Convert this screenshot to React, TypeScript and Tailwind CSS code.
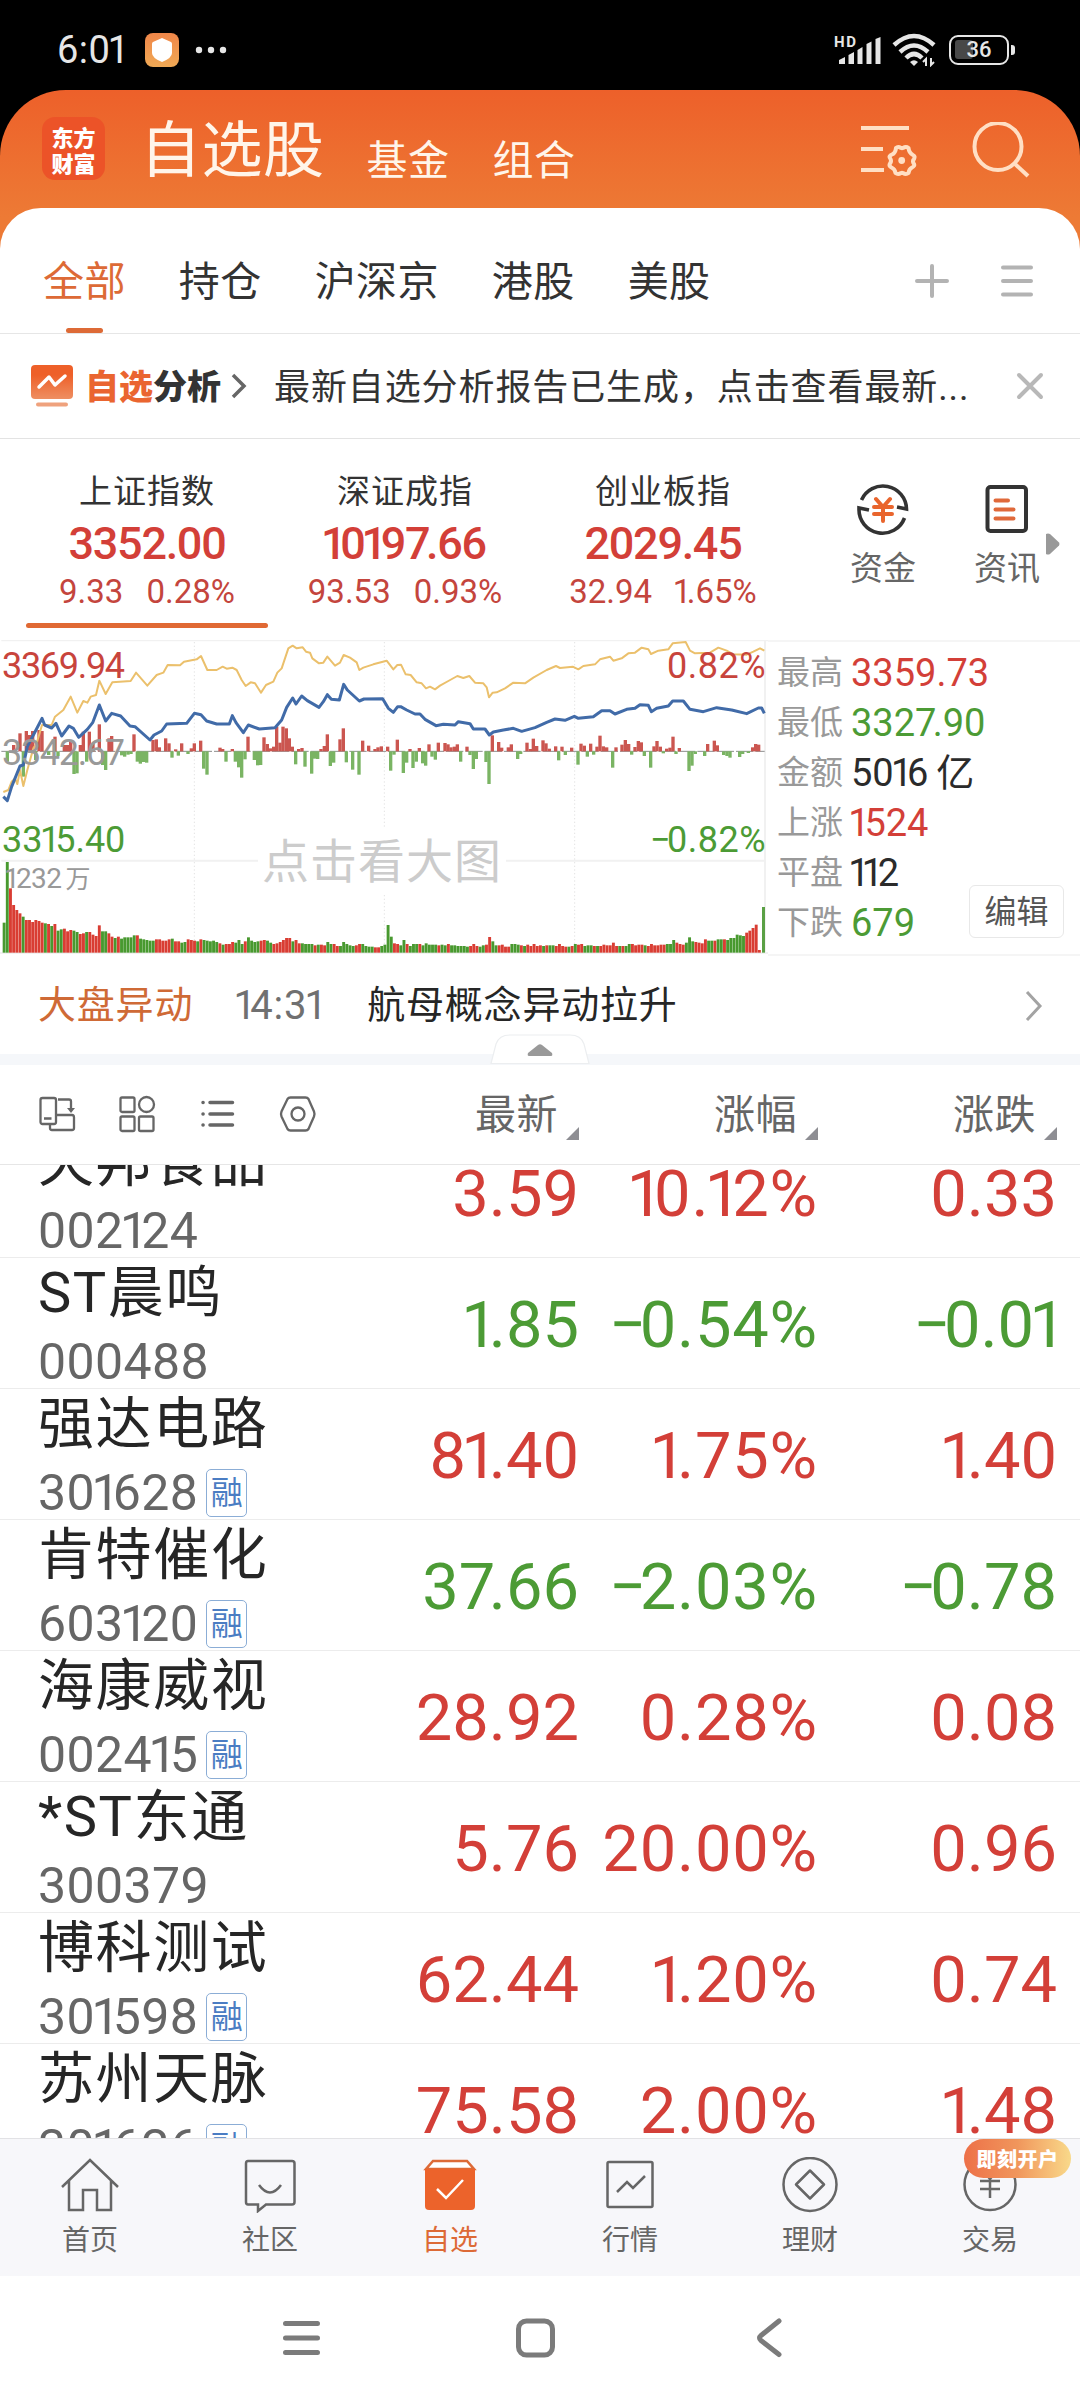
import type { ReactNode } from 'react';

type Direction = 'up' | 'down' | 'flat';

const directionColor: Record<Direction, string> = {
  up: 'text-[#d33f38]',
  down: 'text-[#4c9b35]',
  flat: 'text-[#2b2b2b]',
};

const groups = ['全部', '持仓', '沪深京', '港股', '美股'];

const indices = [
  { name: '上证指数', value: '3352.00', change: '9.33', percent: '0.28%' },
  { name: '深证成指', value: '10197.66', change: '93.53', percent: '0.93%' },
  { name: '创业板指', value: '2029.45', change: '32.94', percent: '1.65%' },
];

const stats: { label: string; value: string; direction: Direction }[] = [
  { label: '最高', value: '3359.73', direction: 'up' },
  { label: '最低', value: '3327.90', direction: 'down' },
  { label: '金额', value: '5016\u2009亿', direction: 'flat' },
  { label: '上涨', value: '1524', direction: 'up' },
  { label: '平盘', value: '112', direction: 'flat' },
  { label: '下跌', value: '679', direction: 'down' },
];

const stocks: {
  name: string;
  code: string;
  margin?: boolean;
  price: string;
  percent: string;
  change: string;
  direction: Direction;
}[] = [
  { name: '天邦食品', code: '002124', price: '3.59', percent: '10.12%', change: '0.33', direction: 'up' },
  { name: 'ST晨鸣', code: '000488', price: '1.85', percent: '−0.54%', change: '−0.01', direction: 'down' },
  { name: '强达电路', code: '301628', margin: true, price: '81.40', percent: '1.75%', change: '1.40', direction: 'up' },
  { name: '肯特催化', code: '603120', margin: true, price: '37.66', percent: '−2.03%', change: '−0.78', direction: 'down' },
  { name: '海康威视', code: '002415', margin: true, price: '28.92', percent: '0.28%', change: '0.08', direction: 'up' },
  { name: '*ST东通', code: '300379', price: '5.76', percent: '20.00%', change: '0.96', direction: 'up' },
  { name: '博科测试', code: '301598', margin: true, price: '62.44', percent: '1.20%', change: '0.74', direction: 'up' },
  { name: '苏州天脉', code: '301626', margin: true, price: '75.58', percent: '2.00%', change: '1.48', direction: 'up' },
];

// Chart geometry uses three units per pixel.
const priceLine =
  '10,500 22,512 35,470 60,408 70,405 82,350 108,300 126,265 134,285 155,294 168,280 185,318 207,288 220,295 236,322 262,298 278,278 298,225 317,273 335,250 362,258 390,288 405,290 450,330 462,315 485,303 500,282 560,280 583,250 603,254 620,273 650,282 688,282 697,257 708,278 730,308 745,285 778,297 825,293 845,270 860,232 878,204 888,222 905,198 922,212 957,232 970,215 982,194 994,208 1018,210 1031,163 1042,180 1078,213 1092,207 1148,206 1165,235 1180,247 1193,230 1202,230 1220,240 1245,252 1260,252 1275,268 1308,287 1330,283 1365,285 1375,275 1410,281 1420,297 1455,297 1468,315 1480,306 1510,300 1540,295 1565,304 1605,293 1640,277 1665,267 1695,271 1723,259 1735,265 1780,260 1805,242 1830,242 1845,252 1880,238 1905,235 1920,224 1945,226 1954,245 1970,235 2005,228 2018,213 2050,213 2070,238 2110,245 2150,233 2195,240 2240,251 2275,234 2285,234 2293,250';

const averageLine =
  '10,486 25,480 35,455 45,445 52,462 60,420 70,468 82,420 100,355 110,340 126,285 155,285 165,260 190,240 212,200 232,248 250,213 262,218 272,200 288,195 298,152 317,192 337,157 392,153 408,128 442,167 470,135 490,128 503,105 540,106 552,95 590,88 603,78 622,120 650,120 668,110 680,116 697,113 710,120 725,150 737,168 752,157 765,160 783,188 798,165 820,155 832,128 845,115 865,55 878,47 890,55 908,52 918,65 930,68 937,85 957,100 970,98 982,80 1005,107 1020,98 1031,75 1050,83 1070,97 1078,120 1090,113 1120,103 1160,92 1180,118 1192,105 1203,104 1217,133 1232,135 1250,157 1265,160 1278,175 1290,170 1305,178 1320,167 1345,153 1372,138 1390,144 1408,138 1425,158 1450,160 1460,172 1467,202 1478,188 1490,187 1515,175 1540,158 1575,160 1600,143 1640,120 1668,108 1680,114 1718,110 1735,118 1750,108 1785,103 1800,88 1830,80 1840,92 1865,85 1885,70 1905,68 1925,53 1945,58 1953,72 1975,62 2005,58 2018,40 2057,36 2070,62 2085,70 2130,68 2155,53 2180,62 2200,73 2240,74 2260,65 2280,55 2293,62';

// [x, y] of the far end of each momentum bar, measured from the zero line.
const ZERO_LINE = 364;
const momentum = [
  [22, 395], [41, 345], [60, 310], [70, 440], [79, 303], [88, 315], [98, 303], [107, 390], [117, 300], [126, 303],
  [146, 375], [165, 320], [174, 378], [193, 345], [203, 345], [212, 330], [222, 432], [231, 430], [241, 345], [250, 305],
  [260, 395], [268, 305], [279, 340], [298, 283], [308, 405], [317, 420], [327, 325], [335, 318], [365, 376], [374, 380],
  [384, 374], [393, 372], [402, 313], [412, 395], [421, 401], [431, 396], [440, 398], [459, 330], [469, 328], [478, 352],
  [497, 325], [507, 340], [516, 383], [527, 358], [535, 377], [545, 340], [564, 372], [574, 355], [583, 340], [602, 332],
  [611, 416], [621, 434], [660, 353], [668, 357], [678, 395], [697, 357], [706, 395], [716, 412], [725, 443], [735, 388],
  [744, 320], [763, 390], [773, 406], [782, 405], [792, 322], [802, 342], [811, 355], [821, 350], [830, 290], [840, 338],
  [849, 290], [859, 295], [868, 325], [877, 350], [887, 403], [896, 357], [906, 354], [915, 410], [935, 431], [944, 386],
  [953, 387], [963, 357], [973, 348], [982, 313], [991, 408], [1001, 398], [1020, 328], [1030, 295], [1039, 397], [1058, 419],
  [1077, 434], [1088, 332], [1106, 347], [1125, 357], [1134, 352], [1144, 349], [1163, 350], [1172, 422], [1182, 374], [1192, 329],
  [1210, 429], [1220, 398], [1230, 357], [1239, 414], [1249, 395], [1258, 354], [1268, 400], [1277, 407], [1287, 343], [1296, 380],
  [1306, 389], [1315, 338], [1335, 339], [1344, 343], [1353, 352], [1363, 350], [1372, 343], [1382, 395], [1401, 350], [1410, 375],
  [1420, 417], [1429, 387], [1458, 396], [1467, 462], [1477, 316], [1496, 336], [1505, 353], [1525, 352], [1534, 343], [1553, 387],
  [1562, 372], [1581, 338], [1591, 357], [1600, 326], [1610, 348], [1629, 331], [1638, 340], [1648, 356], [1667, 349], [1676, 391],
  [1686, 350], [1696, 375], [1715, 353], [1734, 404], [1743, 341], [1753, 347], [1762, 380], [1772, 341], [1781, 374], [1791, 350],
  [1800, 317], [1810, 349], [1820, 352], [1838, 413], [1848, 352], [1866, 344], [1876, 330], [1886, 342], [1895, 374], [1905, 351],
  [1915, 333], [1924, 337], [1933, 378], [1952, 413], [1962, 349], [1971, 333], [1981, 350], [1990, 370], [2000, 356], [2010, 353],
  [2019, 320], [2028, 372], [2038, 354], [2067, 423], [2076, 407], [2086, 372], [2114, 378], [2123, 342], [2143, 332], [2152, 346],
  [2171, 375], [2181, 378], [2190, 383], [2219, 381], [2228, 372], [2245, 369], [2258, 352], [2267, 342], [2276, 344],
];

const volumes = [
  90, 272, 193, 143, 128, 118, 108, 98, 98, 92, 98, 95, 90, 88, 86, 80, 86, 66, 70, 72, 64, 68, 66, 62, 56, 58, 62, 62, 54, 50,
  82, 64, 64, 58, 48, 44, 48, 42, 46, 46, 46, 52, 52, 42, 40, 38, 36, 36, 40, 40, 36, 36, 40, 42, 34, 34, 30, 32, 40, 38,
  36, 34, 40, 38, 36, 34, 36, 32, 28, 24, 26, 26, 32, 30, 38, 26, 34, 46, 36, 32, 34, 36, 38, 36, 30, 26, 28, 32, 38, 44,
  44, 34, 38, 28, 28, 26, 26, 26, 22, 24, 24, 22, 32, 26, 26, 20, 20, 32, 26, 22, 20, 22, 26, 26, 20, 18, 18, 16, 16, 20,
  24, 83, 48, 28, 26, 22, 38, 26, 20, 26, 26, 26, 22, 28, 24, 24, 24, 22, 24, 22, 26, 22, 22, 20, 20, 20, 18, 20, 26, 20,
  18, 22, 24, 47, 34, 22, 22, 24, 18, 18, 26, 26, 24, 22, 20, 24, 20, 26, 20, 22, 20, 22, 22, 22, 20, 26, 20, 18, 18, 20,
  26, 24, 26, 20, 22, 22, 20, 20, 20, 24, 22, 22, 30, 20, 20, 20, 20, 26, 26, 22, 24, 24, 22, 20, 26, 22, 22, 24, 24, 26,
  26, 38, 30, 26, 24, 30, 46, 34, 32, 30, 28, 40, 36, 36, 36, 40, 40, 40, 38, 44, 44, 54, 52, 50, 60, 66, 74, 84, 8,
];

// One letter for each volume bar: r rises, g falls.
const volumeTrend =
  'ggrrrrgrrrrrrgrgrggrrrggrrgrrrrggrrgrgggggrgggggrrrrrgrrggrrrgrgggggrgrrrgggrggggrrggrrrrrrgrrggggrgrrggrrgggggrrggggrr' +
  'ggggrrggrgggrgggggrggrggggggrrrggrrggrrrrgggrgrrrrrgrggrrrrgrgrrgggrgrrrrrrgrggrrrrgrrrrrrgggrrrgggrrrrggrggrggggggrrrrr';

const fontStack = "font-['Roboto','Noto_Sans_CJK_SC',sans-serif]";

// Figures are proportional in this design: tighten the one, the minus and a seven before the point.
function Num({ value }: { value: string }) {
  return (
    <>
      {value.split(/(1|−|7(?=\.))/).map((part, i) => {
        if (part === '1') {
          return (
            <span key={i} className="-ml-[0.07em] tracking-[-0.14em]">
              1
            </span>
          );
        }
        if (part === '−' || part === '7') {
          return (
            <span key={i} className="tracking-[-0.1em]">
              {part}
            </span>
          );
        }
        return part;
      })}
    </>
  );
}

function StatusBar() {
  return (
    <div className="h-[90px] flex items-center pt-[9px] pl-[57px] pr-[65px] text-[#e6e6e6]">
      <span className="text-[38px] leading-none tracking-[0.5px]">
        <Num value="6:01" />
      </span>
      <span className="ml-[21px] w-[34px] h-[34px] rounded-[8px] bg-linear-to-b from-[#ef8649] to-[#f0a955] flex items-center justify-center">
        <svg width="22" height="24" viewBox="0 0 22 24" fill="#fff">
          <path d="M11 0 L20 4 Q21 4.500 21 6 V15 Q21 20 11 24 Q1 20 1 15 V6 Q1 4.500 2 4 Z" />
        </svg>
      </span>
      <svg className="ml-[16px]" width="32" height="8" viewBox="0 0 32 8" fill="#e6e6e6">
        <circle cx="4" cy="4" r="3.200" />
        <circle cx="16" cy="4" r="3.200" />
        <circle cx="28" cy="4" r="3.200" />
      </svg>
      <div className="ml-auto flex items-center">
        <svg width="48" height="32" viewBox="0 0 48 32" fill="#e6e6e6">
          <text x="0" y="13" fontSize="15" fontWeight="700" textLength="22">
            HD
          </text>
          <path d="M5 30 V26 L11 23 V30 Z M14.500 30 V21 L20 18 V30 Z M23.500 30 V16 L28.500 13 V30 Z M32.500 30 V10 L37.500 7.500 V30 Z M41.500 30 V5 L46.500 3 V30 Z" />
        </svg>
        <svg className="ml-[10px]" width="44" height="34" viewBox="0 0 44 34" fill="none" stroke="#e6e6e6" strokeWidth="4.500">
          <path d="M2 12 Q22 -6 42 12" />
          <path d="M8 19 Q22 6 36 19" />
          <path d="M14 25 Q22 17 30 25" />
          <path d="M18 29 Q22 25.500 26 29 L22 33 Z" fill="#e6e6e6" stroke="none" />
          <path d="M34 33 V26 L31 29 M39 25 V32 L42 29" strokeWidth="2" />
        </svg>
        <div className="relative ml-[13px] w-[60px] h-[30px] rounded-[9px] border-[2.5px] border-[#e6e6e6] flex items-center justify-center">
          <span className="absolute left-[4px] top-[3px] w-[18px] h-[19px] rounded-[3px] bg-[#484848]" />
          <span className="relative text-[22px] leading-none font-medium">36</span>
        </div>
        <span className="ml-[2px] w-[4px] h-[10px] rounded-r-[3px] bg-[#e6e6e6]" />
      </div>
    </div>
  );
}

function TitleBar() {
  return (
    <header className="h-[170px] rounded-t-[66px] bg-linear-to-b from-[#ed602a] to-[#ed7a35] to-75% flex items-start pl-[42px] text-[#fff5ea]">
      <div className="mt-[27px] w-[63px] h-[63px] rounded-[13px] bg-[#ec5328] text-white flex flex-col items-center justify-center font-black font-['Noto_Sans_CJK_SC',sans-serif] text-[22px] leading-[26px]">
        <span>东方</span>
        <span>财富</span>
      </div>
      <h1 className="ml-[35px] mt-[16px] text-[61px] leading-[90px] tracking-[0.5px] font-normal">自选股</h1>
      <span className="ml-[42px] mt-[41px] text-[41px] leading-[60px] tracking-[0.5px]">基金</span>
      <span className="ml-[43px] mt-[41px] text-[41px] leading-[60px] tracking-[0.5px]">组合</span>
      <svg className="ml-auto mt-[33px]" width="60" height="54" viewBox="0 0 60 54" fill="none" stroke="#ffdfc4" strokeWidth="4">
        <path d="M2 5 H50 M2 26 H24 M2 47 H25" />
        <path
          strokeLinejoin="round"
          d="M37 25 Q39 23 42 25 Q43 25.500 44 25 Q47 23 49.500 25 Q50 30 54 32 Q56.500 33 55 36 Q53 38 55 41 Q56 43 53 44.500 Q50 46 49.500 50 Q47 52 44 50 Q43 49.500 42 50 Q39 52 36.500 50 Q36 46 32.500 44.500 Q29.500 43 31 40.500 Q33 38 31 35 Q29.500 33 33 31.500 Q36.500 30 37 25 Z"
        />
        <circle cx="42.700" cy="37.500" r="3.400" fill="#ffdfc4" stroke="none" />
      </svg>
      <svg className="ml-[52px] mr-[49px] mt-[32px]" width="60" height="58" viewBox="0 0 60 58" fill="none" stroke="#ffdfc4" strokeWidth="4">
        <circle cx="27" cy="24.500" r="23.500" />
        <path d="M43 41 L57 54" />
      </svg>
    </header>
  );
}

function GroupTabs() {
  return (
    <nav className="h-[126px] border-b border-[#e6e6e6] flex pl-[43px] pr-[46px] text-[41px] tracking-[0.4px] text-[#333]">
      {groups.map((group, i) => (
        <div key={group} className="mr-[53px] relative pt-[44px]">
          <span className={i === 0 ? 'leading-[60px] text-[#dd6a36]' : 'leading-[60px]'}>{group}</span>
          {i === 0 && <span className="absolute left-[23px] bottom-0 w-[37px] h-[5px] rounded-full bg-[#dd6a36]" />}
        </div>
      ))}
      <svg className="ml-auto mt-[55px]" width="36" height="36" viewBox="0 0 36 36" stroke="#b3b3b3" strokeWidth="4" strokeLinecap="round">
        <path d="M18 3 V33 M3 18 H33" />
      </svg>
      <svg className="ml-[50px] mt-[55px]" width="34" height="36" viewBox="0 0 34 36" stroke="#b3b3b3" strokeWidth="4" strokeLinecap="round">
        <path d="M3 4.500 H31 M3 18 H31 M3 31.500 H31" />
      </svg>
    </nav>
  );
}

function AnalysisBanner() {
  return (
    <div className="h-[105px] border-b border-[#e3e3e3] flex items-center pl-[31px] pr-[36px]">
      <svg width="42" height="42" viewBox="0 0 42 42">
        <defs>
          <linearGradient id="banner" x1="0" y1="0" x2="0" y2="1">
            <stop offset="0.300" stopColor="#ee6029" />
            <stop offset="1" stopColor="#ee8f62" />
          </linearGradient>
        </defs>
        <rect width="42" height="34" rx="4" fill="url(#banner)" />
        <path d="M8 22 L18 12 L24 20 L34 11" fill="none" stroke="#fff" strokeWidth="3.500" strokeLinecap="round" strokeLinejoin="round" />
        <rect x="5" y="37.500" width="32" height="4" rx="2" fill="#efa27d" />
      </svg>
      <span className="ml-[12px] mb-[2px] text-[34px] leading-[50px] font-black font-['Noto_Sans_CJK_SC',sans-serif] text-[#333]">
        <span className="text-[#ea6530]">自选</span>分析
      </span>
      <svg className="ml-[9px]" width="18" height="26" viewBox="0 0 18 26" fill="none" stroke="#666" strokeWidth="3.500">
        <path d="M3 2 L14 13 L3 24" />
      </svg>
      <p className="ml-[26px] mt-[4px] text-[36px] leading-[54px] tracking-[0.9px] text-[#333] whitespace-nowrap">
        最新自选分析报告已生成，点击查看最新...
      </p>
      <svg className="ml-auto" width="28" height="28" viewBox="0 0 28 28" stroke="#b8b8b8" strokeWidth="4" strokeLinecap="round">
        <path d="M3 3 L25 25 M25 3 L3 25" />
      </svg>
    </div>
  );
}

function IndexStrip() {
  return (
    <section className="relative h-[201px] flex pl-[18px]">
      {indices.map((index, i) => (
        <div key={index.name} className="w-[258px] flex flex-col items-center">
          <span className="mt-[28px] text-[33px] leading-[50px] tracking-[1px] text-[#333]">{index.name}</span>
          <span className="text-[45px] leading-[54px] tracking-[-1.3px] font-medium text-[#d33f38]">
            <Num value={index.value} />
          </span>
          <span className="text-[33px] leading-[42px] flex gap-[23px] text-[#c4453d]">
            <span>
              <Num value={index.change} />
            </span>
            <span>
              <Num value={index.percent} />
            </span>
          </span>
          {i === 0 && <span className="mt-[10px] w-[242px] h-[5px] rounded-full bg-[#e06934]" />}
        </div>
      ))}
      <div className="ml-[40px] w-[102px] pt-[43px] flex flex-col items-center text-[33px] leading-[50px] text-[#666]">
        <svg width="54" height="54" viewBox="0 0 54 54" fill="none" stroke="#333" strokeWidth="3.600">
          <path d="M5.500 18 A23.500 23.500 0 0 1 50.500 27 L41 25" />
          <path d="M48.500 36 A23.500 23.500 0 0 1 3 27 V26 L13 28" />
          <path d="M20 17 L27 25 L34 17 M18 25 H36 M18 32 H36 M27 25 V39" stroke="#e9652d" strokeWidth="4" strokeLinecap="round" />
        </svg>
        <span className="mt-[8px]">资金</span>
      </div>
      <div className="ml-[22px] w-[102px] pt-[43px] flex flex-col items-center text-[33px] leading-[50px] text-[#666]">
        <svg width="54" height="54" viewBox="0 0 54 54" fill="none" stroke="#333" strokeWidth="4" strokeLinecap="round">
          <rect x="7.500" y="5" width="38.500" height="44" rx="3" />
          <path d="M15.500 18.500 H28 M15.500 27.500 H33.500 M15.500 36.500 H33.500" stroke="#e0693a" />
        </svg>
        <span className="mt-[8px]">资讯</span>
      </div>
      <svg className="absolute right-[20px] top-[94px]" width="14" height="22" viewBox="0 0 14 22" fill="#999">
        <path d="M0 1 Q2 0 4 1 L13 9.500 Q14 11 13 12.500 L4 21 Q2 22 0 21 Z" />
      </svg>
    </section>
  );
}

function ChartLabel({ className, children }: { className: string; children: ReactNode }) {
  return <span className={`absolute leading-none whitespace-nowrap ${className}`}>{children}</span>;
}

function MinuteChart() {
  return (
    <div className="relative w-[768px] h-[316px]">
      <svg width="768" height="316" viewBox="0 30 2304 948" fill="none">
        <path d="M4 31 H2304 M4 692 H2294 M2295 30 V968 M0 969 H2304" stroke="#f1f1f1" strokeWidth="6" />
        <path d="M583 36 V968 M1153 36 V968 M1724 36 V968" stroke="#e3e3e3" strokeWidth="3" strokeDasharray="4 7" />
        <path d={`M4 ${ZERO_LINE} H2294`} stroke="#8c8c8c" strokeWidth="3" strokeDasharray="52 6" />
        {momentum.map(([x, y]) => (
          <rect
            key={x}
            x={x - 5}
            y={Math.min(y, ZERO_LINE)}
            width="10"
            height={Math.abs(y - ZERO_LINE)}
            fill={y < ZERO_LINE ? '#cb5650' : '#7ab463'}
          />
        ))}
        {volumes.map((height, i) => (
          <rect
            key={i}
            x={8 + i * 9.52}
            y={968 - height}
            width="8.700"
            height={height}
            fill={volumeTrend[i] === 'g' ? '#48992f' : '#d93d33'}
          />
        ))}
        <rect x="2286" y="831" width="9" height="137" fill="#5aa045" />
        <polyline points={averageLine} stroke="#ebc06c" strokeWidth="6" strokeLinejoin="round" />
        <polyline points={priceLine} stroke="#416ba8" strokeWidth="9" strokeLinejoin="round" />
      </svg>
      <ChartLabel className="left-[2px] top-[8px] text-[36px] tracking-[-1.3px] text-[#c8443c]">3369.94</ChartLabel>
      <ChartLabel className="left-[2px] top-[95px] text-[36px] tracking-[-1.3px] text-[#999]">3342.67</ChartLabel>
      <ChartLabel className="left-[2px] top-[182px] text-[36px] text-[#4c9b35]">
        <Num value="3315.40" />
      </ChartLabel>
      <ChartLabel className="left-[6px] top-[225px] text-[28px] tracking-[-0.5px] text-[#999]">
        <Num value="1232" />
        <span className="ml-[4px] text-[25px]">万</span>
      </ChartLabel>
      <ChartLabel className="right-[2px] top-[8px] text-[36px] tracking-[0.5px] text-[#c8443c]">0.82%</ChartLabel>
      <ChartLabel className="right-[2px] top-[182px] text-[36px] tracking-[0.5px] text-[#4c9b35]">
        <Num value="−0.82%" />
      </ChartLabel>
      <div className="absolute left-[258px] top-[189px] w-[248px] h-[66px] bg-white flex items-center justify-center text-[47px] tracking-[1px] text-[#ccc]">
        点击看大图
      </div>
    </div>
  );
}

function MarketPanel() {
  return (
    <section className="h-[316px] flex">
      <MinuteChart />
      <div className="relative grow border-y-2 border-[#f5f5f5] pt-[6px] pl-[9px]">
        {stats.map((stat) => (
          <div key={stat.label} className="h-[50px] flex items-center">
            <span className="w-[74px] text-[33px] text-[#999]">{stat.label}</span>
            <span className={`text-[38px] ${directionColor[stat.direction]}`}>
              <Num value={stat.value} />
            </span>
          </div>
        ))}
        <button className="absolute right-[16px] bottom-[16px] w-[95px] h-[53px] rounded-[6px] border border-[#e8e8e8] bg-white text-[32px] text-[#555]">
          编辑
        </button>
      </div>
    </section>
  );
}

function NewsRow() {
  return (
    <div className="relative h-[109px] border-b-[11px] border-[#f5f7fa] flex items-center pl-[38px] pr-[37px] pt-[1px] text-[38px] tracking-[0.8px] text-[#262626]">
      <span className="text-[#cf6a36]">大盘异动</span>
      <span className="ml-[43px] w-[131px] text-[40px] text-[#707070]">
        <Num value="14:31" />
      </span>
      <span>航母概念异动拉升</span>
      <svg className="ml-auto" width="18" height="32" viewBox="0 0 18 32" fill="none" stroke="#a3a3a3" strokeWidth="3">
        <path d="M2 2 L15 16 L2 30" />
      </svg>
      <svg className="absolute left-[490px] top-[78px]" width="100" height="31" viewBox="0 0 100 31">
        <path d="M1 29.500 L6 10 Q9 1 20 1 H80 Q91 1 94 10 L99 29.500 Z" fill="#fff" stroke="#eceef0" strokeWidth="1.200" />
        <path d="M48 11 Q50 9.500 52 11 L62 19 Q63 22 61 22 H39 Q37 22 38 19 Z" fill="#999" />
      </svg>
    </div>
  );
}

function ListHeader() {
  return (
    <div className="h-[100px] border-b border-[#e6e6e6] flex items-center pl-[39px] pr-[23px]">
      <div className="flex gap-[40px] pb-[2px]">
        <svg width="40" height="40" viewBox="0 0 40 40" fill="none" stroke="#666" strokeWidth="2.300">
          <rect x="1.500" y="4" width="15.500" height="26" rx="2" />
          <path d="M5 24.500 H12.500 M19 5.500 H30 Q32 5.500 32 7.500 V15 M11 30 V34 Q11 36 13 36 H33 Q35 36 35 34 V23.500 Q35 21 33 21 H18" />
          <path d="M28 14 H36 L32 19 Z" fill="#666" stroke="none" />
        </svg>
        <svg width="40" height="40" viewBox="0 0 40 40" fill="none" stroke="#666" strokeWidth="2.300">
          <rect x="1.500" y="3.500" width="14" height="14.500" rx="1.500" />
          <circle cx="27.500" cy="10.500" r="7.500" />
          <rect x="1.500" y="22.500" width="14" height="14.500" rx="1.500" />
          <rect x="20" y="22.500" width="14.500" height="14.500" rx="1.500" />
        </svg>
        <svg width="40" height="40" viewBox="-2 0 40 40" stroke="#666" strokeWidth="3.500" strokeLinecap="round">
          <path d="M9 8.500 H31.500 M9 20 H31.500 M9 31 H31.500 M2 8.500 H2.100 M2 20 H2.100 M2 31 H2.100" />
        </svg>
        <svg width="40" height="40" viewBox="-1 0 40 40" fill="none" stroke="#666" strokeWidth="2.300">
          <path d="M10.500 3.500 H25.500 Q27.500 3.500 28.500 5 L34 17.500 Q35 20 34 22.500 L28.500 35 Q27.500 36.500 25.500 36.500 H10.500 Q8.500 36.500 7.500 35 L1.500 22.500 Q0.500 20 1.500 17.500 L7.500 5 Q8.500 3.500 10.500 3.500 Z" />
          <circle cx="18" cy="20" r="6.500" />
        </svg>
      </div>
      {['最新', '涨幅', '涨跌'].map((label, i) => (
        <div key={label} className={i === 0 ? 'ml-auto w-[239px] flex justify-end items-end' : 'w-[239px] flex justify-end items-end'}>
          <span className="text-[41px] leading-[60px] tracking-[0.5px] text-[#666]">{label}</span>
          <svg className="ml-[8px] mb-[5px]" width="13" height="13" viewBox="0 0 13 13" fill="#8e8e93">
            <path d="M13 0 V13 H0 Z" />
          </svg>
        </div>
      ))}
    </div>
  );
}

function StockList() {
  return (
    <main className="h-[973px] overflow-hidden">
      <div className="-mt-[38px]">
        {stocks.map((stock) => (
          <div key={stock.code} className="h-[131px] border-b border-[#ececec] flex pl-[38px] pr-[23px]">
            <div className="w-[262px]">
              <div className="h-[70px] text-[56px] leading-[70px] tracking-[1.6px] text-[#262626] whitespace-nowrap">{stock.name}</div>
              <div className="h-[58px] flex items-start text-[50px] tracking-[0.4px] leading-[68px] text-[#666]">
                <span>
                  <Num value={stock.code} />
                </span>
                {stock.margin && (
                  <span className="ml-[8px] mt-[10px] w-[41px] h-[48px] rounded-[5px] border-[1.5px] border-[#8badd6] flex items-center justify-center text-[32px] leading-none tracking-normal text-[#4b7dc3]">
                    融
                  </span>
                )}
              </div>
            </div>
            <div className={`flex grow justify-end text-[65px] leading-[134px] whitespace-nowrap ${directionColor[stock.direction]}`}>
              <span>
                <Num value={stock.price} />
              </span>
              <span className="w-[239px] text-right tracking-[0.8px]">
                <Num value={stock.percent} />
              </span>
              <span className="w-[239px] text-right">
                <Num value={stock.change} />
              </span>
            </div>
          </div>
        ))}
      </div>
    </main>
  );
}

const navItems: { label: string; icon: ReactNode }[] = [
  {
    label: '首页',
    icon: <path d="M2 30 L30 3 L58 30 M9 24 V53 H23 V33 H37 V53 H51 V24" />,
  },
  {
    label: '社区',
    icon: (
      <>
        <path d="M8 4 H52 Q54.500 4 54.500 6.500 V45 Q54.500 47.500 52 47.500 H26 L18 54 V47.500 H8 Q6 47.500 6 45 V6.500 Q6 4 8 4 Z" />
        <path d="M19 28 Q30 43 41 28" />
      </>
    ),
  },
  {
    label: '自选',
    icon: (
      <>
        <path d="M13 4 H47 L54 12 H6 Z" fill="#fff" stroke="#dd6a36" />
        <path d="M5 12 H55 V49 Q55 53 51 53 H9 Q5 53 5 49 Z" fill="#ec632b" stroke="none" />
        <path d="M17 32 L26 41 L43 23" stroke="#fff" />
      </>
    ),
  },
  {
    label: '行情',
    icon: (
      <>
        <rect x="7.500" y="5" width="45" height="45" rx="1.500" />
        <path d="M17 35 L27 25 L33 31 L45 19" />
      </>
    ),
  },
  {
    label: '理财',
    icon: (
      <>
        <circle cx="30" cy="27.500" r="26.500" />
        <path d="M30 13.500 L44 27.500 L30 41.500 L16 27.500 Z" strokeLinejoin="round" />
      </>
    ),
  },
  {
    label: '交易',
    icon: (
      <>
        <circle cx="30" cy="27.500" r="25.500" />
        <path d="M22 12 L30 22 L38 12 M20 24 H40 M20 32 H40 M30 22 V41" />
      </>
    ),
  },
];

function BottomNav() {
  return (
    <nav className="relative h-[138px] bg-[#f7f7fa] border-t border-[#e2e2e5] flex">
      {navItems.map((item) => (
        <div
          key={item.label}
          className={`w-[180px] pt-[18px] flex flex-col items-center text-[28px] leading-[40px] ${
            item.label === '自选' ? 'text-[#dd6a36]' : 'text-[#666]'
          }`}
        >
          <svg width="60" height="56" viewBox="0 0 60 56" fill="none" stroke="#666" strokeWidth="2.500">
            {item.icon}
          </svg>
          <span className="mt-[8px]">{item.label}</span>
        </div>
      ))}
      <span className="absolute left-[964px] top-0 w-[107px] h-[39px] rounded-full bg-linear-to-r from-[#ed7048] via-[#f0965c] to-[#f8d98a] text-white text-[20px] leading-[40px] tracking-[0.5px] font-black text-center font-['Noto_Sans_CJK_SC',sans-serif]">
        即刻开户
      </span>
    </nav>
  );
}

function SystemNav() {
  return (
    <div className="h-[124px] flex items-start pt-[40px] pl-[281px]">
      <svg width="504" height="44" viewBox="0 0 504 44" fill="none" stroke="#7b7b7b" strokeWidth="5" strokeLinecap="round" strokeLinejoin="round">
        <path d="M4.500 7.500 H36.500 M4.500 22 H36.500 M4.500 36.500 H36.500" />
        <rect x="237.500" y="5" width="34" height="34" rx="8" />
        <path d="M498 5 L480 19.500 Q477 22 480 24.500 L498 38.500" />
      </svg>
    </div>
  );
}

export default function App() {
  return (
    <div className={`w-[1080px] h-[2400px] overflow-hidden bg-black ${fontStack}`}>
      <StatusBar />
      <TitleBar />
      <div className="relative -mt-[52px] rounded-t-[41px] bg-white">
        <GroupTabs />
        <AnalysisBanner />
        <IndexStrip />
        <MarketPanel />
        <NewsRow />
        <ListHeader />
        <StockList />
        <BottomNav />
        <SystemNav />
      </div>
    </div>
  );
}
